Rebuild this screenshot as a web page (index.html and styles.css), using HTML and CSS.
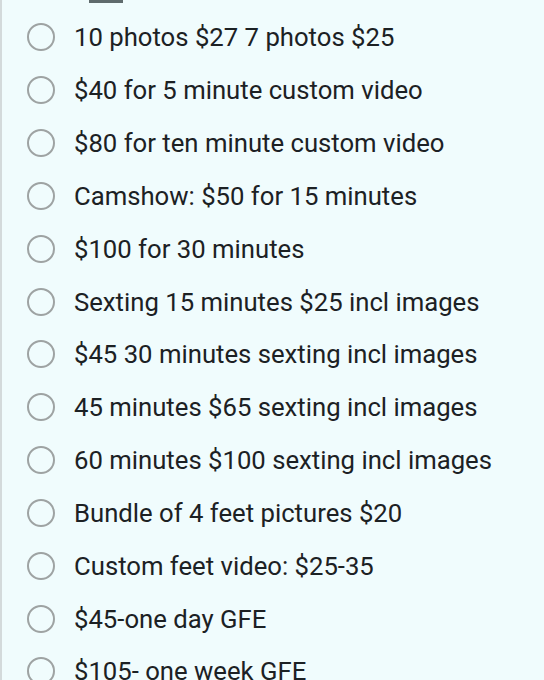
FILE: index.html
```html
<!DOCTYPE html>
<html>
<head>
<meta charset="utf-8">
<link rel="stylesheet" href="styles.css">
</head>
<body>
<div class="page">
  <div class="handle"></div>
  <ul class="options">
    <li class="option"><span class="radio"></span><span class="label">10 photos $27 7 photos $25</span></li>
    <li class="option"><span class="radio"></span><span class="label">$40 for 5 minute custom video</span></li>
    <li class="option"><span class="radio"></span><span class="label">$80 for ten minute custom video</span></li>
    <li class="option"><span class="radio"></span><span class="label">Camshow: $50 for 15 minutes</span></li>
    <li class="option"><span class="radio"></span><span class="label">$100 for 30 minutes</span></li>
    <li class="option"><span class="radio"></span><span class="label">Sexting 15 minutes $25 incl images</span></li>
    <li class="option"><span class="radio"></span><span class="label">$45 30 minutes sexting incl images</span></li>
    <li class="option"><span class="radio"></span><span class="label">45 minutes $65 sexting incl images</span></li>
    <li class="option"><span class="radio"></span><span class="label">60 minutes $100 sexting incl images</span></li>
    <li class="option"><span class="radio"></span><span class="label">Bundle of 4 feet pictures $20</span></li>
    <li class="option"><span class="radio"></span><span class="label">Custom feet video: $25-35</span></li>
    <li class="option"><span class="radio"></span><span class="label">$45-one day GFE</span></li>
    <li class="option"><span class="radio"></span><span class="label">$105- one week GFE</span></li>
  </ul>
</div>
</body>
</html>
```
FILE: styles.css
```css
html, body {
  margin: 0;
  padding: 0;
  background: #f0fcfd;
  overflow: hidden;
}
.page {
  width: 544px;
  height: 680px;
  box-sizing: border-box;
  border-left: 2px solid #d3dadb;
  position: relative;
  font-family: Roboto, "Noto Sans", sans-serif;
}
.handle {
  position: absolute;
  left: 87px;
  top: 0;
  width: 34px;
  height: 3px;
  background: #5f6b6d;
}
.options {
  list-style: none;
  margin: 0;
  padding: 11px 0 0 25px;
}
.option {
  display: flex;
  align-items: center;
  height: 52.83px;
}
.radio {
  flex: none;
  width: 24px;
  height: 24px;
  border: 2px solid #9ea3a3;
  border-radius: 50%;
  margin-right: 19px;
}
.label {
  font-size: 25.7px;
  color: #1c2124;
  line-height: 30px;
  white-space: nowrap;
}
```
